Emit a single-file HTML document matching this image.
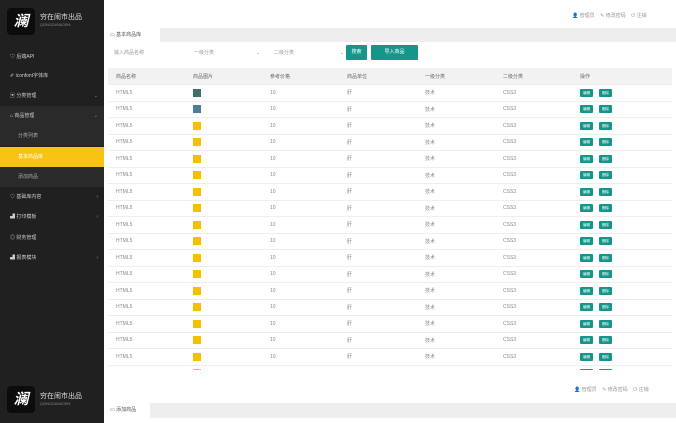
<!DOCTYPE html><html><head><meta charset="utf-8"><style>
*{margin:0;padding:0;box-sizing:border-box}
body{width:676px;height:423px;overflow:hidden;background:#fff;font-family:"Liberation Sans","Noto Sans CJK SC",sans-serif;font-size:5px;color:#777;position:relative}
.side{position:absolute;left:0;top:0;width:104px;height:423px;background:#202020}
.logo{position:absolute;left:7px;width:28px;height:27px;background:#0c0c0c;border-radius:4px;color:#fff;font-size:15px;font-weight:bold;font-style:italic;text-align:center;line-height:27px}
.lt{position:absolute;left:40px;color:#ddd;font-size:7px}
.ls{position:absolute;left:40px;color:#888;font-size:3.5px}
.mi{position:absolute;left:0;width:104px;height:20px;line-height:20px;padding-left:10px;color:#ccc;font-size:5px}
.mi .ar{position:absolute;right:6px;color:#888}
.sub{background:#2a2a2a;color:#aaa;padding-left:18px}
.act{background:#f7c413;color:#fff}
.tabbar{position:absolute;left:104px;top:28px;width:572px;height:14px;background:#eee}
.tab{position:absolute;left:104px;top:28px;width:56px;height:14px;background:#fff;font-size:5px;line-height:14px;padding-left:6px;color:#555}
.inp{position:absolute;top:46px;height:14px;line-height:14px;font-size:5px;color:#999;padding-left:6px}
.btn{position:absolute;top:45px;height:15px;line-height:15px;background:#16968a;color:#fff;text-align:center;font-size:5px;border-radius:1px}
table{position:absolute;left:108px;top:68px;width:564px;border-collapse:collapse}
.wrap{position:absolute;left:0;top:0;width:676px;height:370px;overflow:hidden}
td,th{height:16.5px;border-bottom:1px solid #eee;font-weight:normal;text-align:left;padding-left:8px;font-size:5px;color:#888}
th{background:#f2f2f2;color:#666}
.im{display:inline-block;width:8px;height:8px;background:#f5c000;vertical-align:middle}
.g{display:inline-block;width:13px;height:8px;background:#16968a;margin-right:6px;vertical-align:middle;border-radius:1px;color:#fff;font-size:3.5px;line-height:8px;text-align:center}
.g::after{content:"编辑"}
.g+.g::after{content:"删除"}
.top{position:absolute;font-size:5px;color:#999}
</style></head><body>
<div class="wrap">
<table>
<tr><th style="width:77px">商品名称</th><th style="width:77px">商品图片</th><th style="width:77px">参考价格</th><th style="width:78px">商品单位</th><th style="width:78px">一级分类</th><th style="width:77px">二级分类</th><th>操作</th></tr>
<tr><td>HTML5</td><td><span class="im" style="background:#3f6f6a"></span></td><td>10</td><td>肝</td><td>技术</td><td>CSS3</td><td><span class="g"></span><span class="g"></span></td></tr>
<tr><td>HTML5</td><td><span class="im" style="background:#4a7f95"></span></td><td>10</td><td>肝</td><td>技术</td><td>CSS3</td><td><span class="g"></span><span class="g"></span></td></tr>
<tr><td>HTML5</td><td><span class="im"></span></td><td>10</td><td>肝</td><td>技术</td><td>CSS3</td><td><span class="g"></span><span class="g"></span></td></tr>
<tr><td>HTML5</td><td><span class="im"></span></td><td>10</td><td>肝</td><td>技术</td><td>CSS3</td><td><span class="g"></span><span class="g"></span></td></tr>
<tr><td>HTML5</td><td><span class="im"></span></td><td>10</td><td>肝</td><td>技术</td><td>CSS3</td><td><span class="g"></span><span class="g"></span></td></tr>
<tr><td>HTML5</td><td><span class="im"></span></td><td>10</td><td>肝</td><td>技术</td><td>CSS3</td><td><span class="g"></span><span class="g"></span></td></tr>
<tr><td>HTML5</td><td><span class="im"></span></td><td>10</td><td>肝</td><td>技术</td><td>CSS3</td><td><span class="g"></span><span class="g"></span></td></tr>
<tr><td>HTML5</td><td><span class="im"></span></td><td>10</td><td>肝</td><td>技术</td><td>CSS3</td><td><span class="g"></span><span class="g"></span></td></tr>
<tr><td>HTML5</td><td><span class="im"></span></td><td>10</td><td>肝</td><td>技术</td><td>CSS3</td><td><span class="g"></span><span class="g"></span></td></tr>
<tr><td>HTML5</td><td><span class="im"></span></td><td>10</td><td>肝</td><td>技术</td><td>CSS3</td><td><span class="g"></span><span class="g"></span></td></tr>
<tr><td>HTML5</td><td><span class="im"></span></td><td>10</td><td>肝</td><td>技术</td><td>CSS3</td><td><span class="g"></span><span class="g"></span></td></tr>
<tr><td>HTML5</td><td><span class="im"></span></td><td>10</td><td>肝</td><td>技术</td><td>CSS3</td><td><span class="g"></span><span class="g"></span></td></tr>
<tr><td>HTML5</td><td><span class="im"></span></td><td>10</td><td>肝</td><td>技术</td><td>CSS3</td><td><span class="g"></span><span class="g"></span></td></tr>
<tr><td>HTML5</td><td><span class="im"></span></td><td>10</td><td>肝</td><td>技术</td><td>CSS3</td><td><span class="g"></span><span class="g"></span></td></tr>
<tr><td>HTML5</td><td><span class="im"></span></td><td>10</td><td>肝</td><td>技术</td><td>CSS3</td><td><span class="g"></span><span class="g"></span></td></tr>
<tr><td>HTML5</td><td><span class="im"></span></td><td>10</td><td>肝</td><td>技术</td><td>CSS3</td><td><span class="g"></span><span class="g"></span></td></tr>
<tr><td>HTML5</td><td><span class="im"></span></td><td>10</td><td>肝</td><td>技术</td><td>CSS3</td><td><span class="g"></span><span class="g"></span></td></tr>
<tr><td>HTML5</td><td><span class="im"></span></td><td>10</td><td>肝</td><td>技术</td><td>CSS3</td><td><span class="g"></span><span class="g"></span></td></tr>
</table>
</div>
<div class="side">
<div class="logo" style="top:8px">澜</div><div class="lt" style="top:12px">穷在闹市出品</div><div class="ls" style="top:23px">QIONGZAINAOSHI</div>
<div class="mi" style="top:47px">♡ 后端API</div>
<div class="mi" style="top:66px">✐ iconfont字体库</div>
<div class="mi" style="top:86px">▣ 分类管理<span class="ar">⌄</span></div>
<div class="mi" style="top:106px;background:#2a2a2a">⌂ 商品管理<span class="ar">⌄</span></div>
<div class="mi sub" style="top:126px">分类列表</div>
<div class="mi sub act" style="top:147px">基本商品库</div>
<div class="mi sub" style="top:167px">添加商品</div>
<div class="mi" style="top:187px">♡ 基础库内容<span class="ar">›</span></div>
<div class="mi" style="top:207px">▟ 打印模板<span class="ar">›</span></div>
<div class="mi" style="top:228px">◎ 财务管理</div>
<div class="mi" style="top:248px">▟ 报表模块<span class="ar">›</span></div>
<div class="logo" style="top:386px">澜</div><div class="lt" style="top:391px">穷在闹市出品</div><div class="ls" style="top:402px">QIONGZAINAOSHI</div>
</div>
<div class="top" style="left:572px;top:12px">👤 管理员 &nbsp;&nbsp; ✎ 修改密码 &nbsp;&nbsp; ⏻ 注销</div>
<div class="tabbar"></div><div class="tab">▭ 基本商品库</div>
<div class="inp" style="left:108px;width:76px">输入商品名称</div>
<div class="inp" style="left:188px;width:76px">一级分类<span style="position:absolute;right:4px">⌄</span></div>
<div class="inp" style="left:268px;width:76px">二级分类<span style="position:absolute;right:0">⌄</span></div>
<div class="btn" style="left:346px;width:21px">搜索</div>
<div class="btn" style="left:371px;width:47px">导入商品</div>
<div class="top" style="left:574px;top:386px">👤 管理员 &nbsp;&nbsp; ✎ 修改密码 &nbsp;&nbsp; ⏻ 注销</div>
<div style="position:absolute;left:104px;top:403px;width:572px;height:15px;background:#eee"></div>
<div style="position:absolute;left:104px;top:403px;width:46px;height:15px;background:#fff;font-size:5px;line-height:15px;padding-left:6px;color:#555">▭ 添加商品</div>
</body></html>
